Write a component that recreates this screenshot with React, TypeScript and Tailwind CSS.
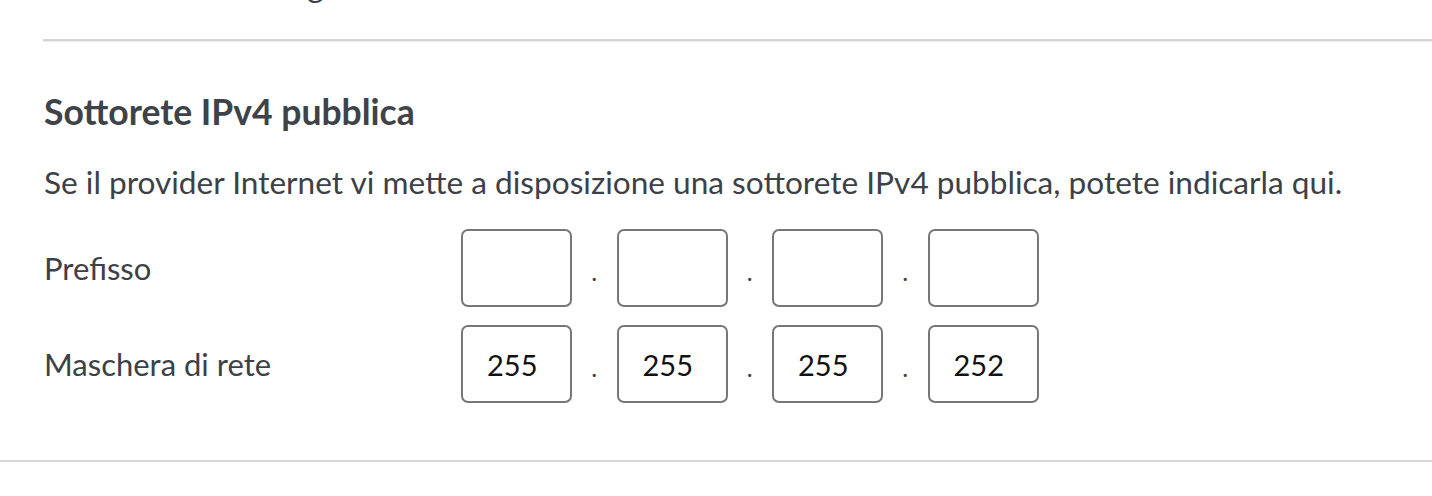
import React from 'react';

const prefix = ['', '', '', ''];
const mask = ['255', '255', '255', '252'];

const IpRow = ({ label, values }: { label: string; values: string[] }) => (
  <div className="flex items-center">
    <span className="w-[417px] text-[31px] leading-[40px] text-[#3d4147]">{label}</span>
    <div className="flex items-center">
      {values.map((v, i) => (
        <React.Fragment key={i}>
          {i > 0 && <span className="flex w-[44.5px] justify-center pt-[8px] text-[25px] text-[#444]">.</span>}
          <input
            readOnly
            value={v}
            className="h-[78px] w-[111px] rounded-[7px] border-2 border-[#777] bg-white pl-[24px] text-[29px] text-[#111] outline-none"
          />
        </React.Fragment>
      ))}
    </div>
  </div>
);

export default function App() {
  return (
    <div className="h-[496px] overflow-hidden bg-white" style={{ fontFamily: 'Lato, "Noto Sans", sans-serif' }}>
      <div className="pl-[43px]">
        <div className="h-[39px] overflow-hidden">
          <p className="-mt-[34px] text-[31.5px] leading-[40px] text-[#3d4147]">Le modalità di collegamento</p>
        </div>
        <div className="h-[2px] bg-[#d4d4d4]" />
        <div className="h-px bg-[#ececec]" />
        <div className="pl-px pt-[48px]">
          <h2 className="text-[35.5px] font-bold leading-[44px] text-[#3e4249]">Sottorete IPv4 pubblica</h2>
          <p className="mt-[28px] text-[31.6px] leading-[40px] text-[#3d4147]">
            Se il provider Internet vi mette a disposizione una sottorete IPv4 pubblica, potete indicarla qui.
          </p>
          <div className="mt-[27px] flex flex-col gap-[18px]">
            <IpRow label="Prefisso" values={prefix} />
            <IpRow label="Maschera di rete" values={mask} />
          </div>
        </div>
      </div>
      <div className="mt-[57px] h-[2px] bg-[#d6d6d6]" />
    </div>
  );
}
